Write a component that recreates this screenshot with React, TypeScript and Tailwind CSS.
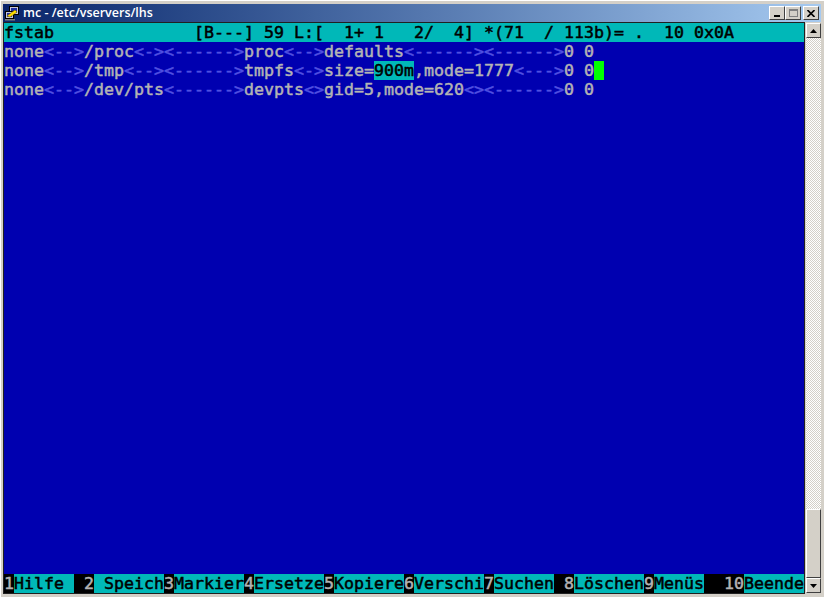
const Row = ({ children }: { children: React.ReactNode }) => (
  <div className="h-[19px] leading-[19px] whitespace-pre">{children}</div>
);

// tab markers are dimmer than the text
const Tab = ({ children }: { children: string }) => <span className="text-[#5050e0]">{children}</span>;

const keys = [
  { k: '1', label: 'Hilfe ' },
  { k: ' 2', label: ' Speich' },
  { k: '3', label: 'Markier' },
  { k: '4', label: 'Ersetze' },
  { k: '5', label: 'Kopiere' },
  { k: '6', label: 'Verschi' },
  { k: '7', label: 'Suchen' },
  { k: ' 8', label: 'Löschen' },
  { k: '9', label: 'Menüs' },
  { k: '  10', label: 'Beende' },
];

const bevel = 'border border-t-white border-l-white border-r-[#404040] border-b-[#404040] bg-[#d4d0c8]';

function WinIcon() {
  return (
    <svg width="16" height="16" viewBox="0 0 16 16" className="shrink-0">
      <rect x="5.5" y="1.5" width="9" height="8" fill="#c8c8d8" stroke="#000" />
      <rect x="7" y="3" width="6" height="5" fill="#2030a0" />
      <rect x="1.5" y="6.5" width="8" height="7" fill="#c8c8d8" stroke="#000" />
      <rect x="3" y="8" width="5" height="4" fill="#2030a0" />
      <rect x="1" y="14" width="10" height="1.5" fill="#808080" />
      <path d="M3 11 L11 5 L13 7 L6 12 Z" fill="#ffe000" stroke="#806000" strokeWidth="0.5" />
    </svg>
  );
}

export default function App() {
  return (
    <div className="w-[824px] h-[597px] overflow-hidden flex flex-col bg-[#d4d0c8] border-t border-t-white border-l border-l-white pl-[2px] pt-[3px] font-['DejaVu_Sans_Mono',monospace]">
      {/* Title bar */}
      <div className="h-[18px] w-[818px] shrink-0 flex items-center pl-[1px] pr-[2px] bg-gradient-to-r from-[#0a246a] to-[#a6caf0]">
        <WinIcon />
        <span className="ml-[3px] text-white text-[12.5px] font-['Open_Sans',sans-serif] font-semibold">mc - /etc/vservers/lhs</span>
        <div className="ml-auto flex items-center">
          <div className={`w-4 h-[14px] ${bevel} flex items-end justify-center pb-[2px]`}>
            <div className="w-[6px] h-[2px] bg-black" />
          </div>
          <div className={`w-4 h-[14px] ${bevel} flex items-center justify-center`}>
            <div className="w-[9px] h-[8px] border border-[#808080] border-t-2" />
          </div>
          <div className={`w-4 h-[14px] ml-[2px] ${bevel} flex items-center justify-center`}>
            <svg width="8" height="7" viewBox="0 0 8 7">
              <path d="M0.5 0 L7.5 7 M7.5 0 L0.5 7" stroke="#000" strokeWidth="1.6" />
            </svg>
          </div>
        </div>
      </div>

      <div className="flex-1 flex min-h-0">
        {/* Terminal */}
        <div className="w-[802px] h-[572px] border border-[#202020] bg-[#0000b0] flex flex-col text-[16.63px] text-[#b4b4b4] [-webkit-text-stroke:0.5px]">
          <div className="h-[19px] leading-[19px] whitespace-pre bg-[#00b8b8] text-black">
            {'fstab              [B---] 59 L:[  1+ 1   2/  4] *(71  / 113b)= .  10 0x0A'}
          </div>
          <Row>
            none<Tab>{'<-->'}</Tab>/proc<Tab>{'<->'}</Tab><Tab>{'<------>'}</Tab>proc<Tab>{'<-->'}</Tab>defaults<Tab>{'<------><------>'}</Tab>0 0
          </Row>
          <Row>
            none<Tab>{'<-->'}</Tab>/tmp<Tab>{'<-->'}</Tab><Tab>{'<------>'}</Tab>tmpfs<Tab>{'<->'}</Tab>size=
            <span className="bg-[#00b8b8] text-black">900m</span>,mode=1777<Tab>{'<--->'}</Tab>0 0
            <span className="inline-block w-[10px] h-[19px] align-top bg-[#00ff00]" />
          </Row>
          <Row>
            none<Tab>{'<-->'}</Tab>/dev/pts<Tab>{'<------>'}</Tab>devpts<Tab>{'<>'}</Tab>gid=5,mode=620<Tab>{'<>'}</Tab><Tab>{'<------>'}</Tab>0 0
          </Row>
          <div className="flex-1" />
          <div className="h-[19px] leading-[19px] whitespace-pre flex">
            {keys.map((item) => (
              <div key={item.k} className="flex">
                <span className="bg-black text-[#b4b4b4]">{item.k}</span>
                <span className="bg-[#00b8b8] text-black">{item.label}</span>
              </div>
            ))}
          </div>
        </div>

        {/* Scrollbar */}
        <div className="w-[15px] ml-px mt-px h-[570px] flex flex-col bg-[repeating-conic-gradient(#d4d0c8_0%_25%,#ffffff_0%_50%)] bg-[length:2px_2px]">
          <div className={`h-[15px] shrink-0 ${bevel} flex items-center justify-center`}>
            <svg width="7" height="4" viewBox="0 0 7 4"><path d="M3.5 0 L7 4 L0 4 Z" fill="#000" /></svg>
          </div>
          <div className="flex-1" />
          <div className={`h-[69px] shrink-0 ${bevel}`} />
          <div className={`h-[15px] shrink-0 ${bevel} flex items-center justify-center`}>
            <svg width="7" height="4" viewBox="0 0 7 4"><path d="M0 0 L7 0 L3.5 4 Z" fill="#000" /></svg>
          </div>
        </div>
      </div>
    </div>
  );
}
